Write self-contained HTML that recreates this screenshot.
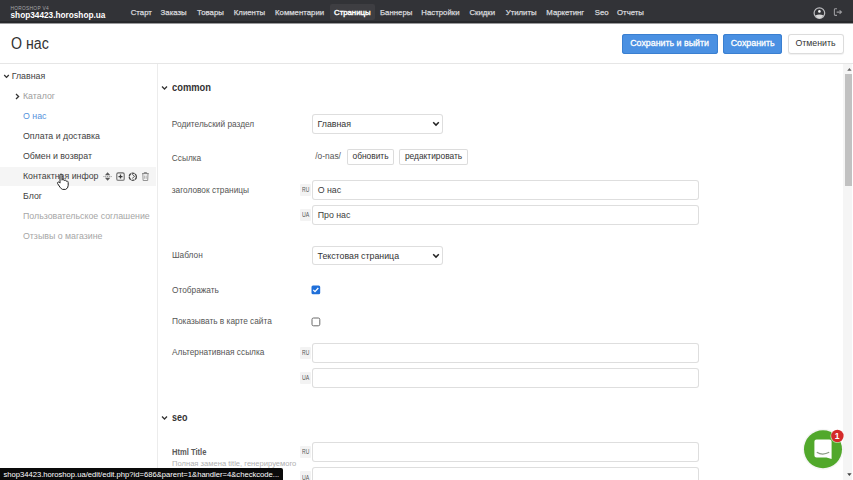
<!DOCTYPE html>
<html><head><meta charset="utf-8"><style>
html,body{margin:0;padding:0;width:853px;height:480px;overflow:hidden;background:#fff;}
body{position:relative;font-family:"Liberation Sans",sans-serif;}
.t{position:absolute;white-space:nowrap;}
.r{position:absolute;}
</style></head><body>
<div class="r" style="left:0px;top:0px;width:853px;height:23.4px;background:#323337"></div>
<div class="r" style="left:0px;top:21px;width:853px;height:2px;background:#27282b"></div>
<div class="r" style="left:0px;top:23px;width:853px;height:1px;background:#9a9a9c"></div>
<div class="r" style="left:329.5px;top:4px;width:45px;height:15.5px;background:#3e3e42;border-radius:2px"></div>
<div class="t" style="left:10.50px;top:7.14px;font-size:4.8px;line-height:4.8px;color:#a8a8ac;font-weight:normal;letter-spacing:0.3px;">HOROSHOP V4</div>
<div class="t" style="left:10.50px;top:11.91px;font-size:8.26px;line-height:8.26px;color:#ffffff;font-weight:bold;">shop34423.horoshop.ua</div>
<div class="t" style="left:130.70px;top:8.70px;font-size:7.8px;line-height:7.8px;color:#d8d8dc;font-weight:normal;-webkit-text-stroke:0.25px #d8d8dc;">Старт</div>
<div class="t" style="left:160.60px;top:8.70px;font-size:7.8px;line-height:7.8px;color:#d8d8dc;font-weight:normal;-webkit-text-stroke:0.25px #d8d8dc;">Заказы</div>
<div class="t" style="left:197.00px;top:8.70px;font-size:7.8px;line-height:7.8px;color:#d8d8dc;font-weight:normal;-webkit-text-stroke:0.25px #d8d8dc;">Товары</div>
<div class="t" style="left:233.80px;top:8.70px;font-size:7.8px;line-height:7.8px;color:#d8d8dc;font-weight:normal;-webkit-text-stroke:0.25px #d8d8dc;">Клиенты</div>
<div class="t" style="left:275.00px;top:8.70px;font-size:7.8px;line-height:7.8px;color:#d8d8dc;font-weight:normal;-webkit-text-stroke:0.25px #d8d8dc;">Комментарии</div>
<div class="t" style="left:334.00px;top:8.70px;font-size:7.8px;line-height:7.8px;color:#ffffff;font-weight:normal;-webkit-text-stroke:0.4px #fff;">Страницы</div>
<div class="t" style="left:380.00px;top:8.70px;font-size:7.8px;line-height:7.8px;color:#d8d8dc;font-weight:normal;-webkit-text-stroke:0.25px #d8d8dc;">Баннеры</div>
<div class="t" style="left:421.30px;top:8.70px;font-size:7.8px;line-height:7.8px;color:#d8d8dc;font-weight:normal;-webkit-text-stroke:0.25px #d8d8dc;">Настройки</div>
<div class="t" style="left:469.40px;top:8.70px;font-size:7.8px;line-height:7.8px;color:#d8d8dc;font-weight:normal;-webkit-text-stroke:0.25px #d8d8dc;">Скидки</div>
<div class="t" style="left:505.70px;top:8.70px;font-size:7.8px;line-height:7.8px;color:#d8d8dc;font-weight:normal;-webkit-text-stroke:0.25px #d8d8dc;">Утилиты</div>
<div class="t" style="left:546.30px;top:8.70px;font-size:7.8px;line-height:7.8px;color:#d8d8dc;font-weight:normal;-webkit-text-stroke:0.25px #d8d8dc;">Маркетинг</div>
<div class="t" style="left:594.80px;top:8.70px;font-size:7.8px;line-height:7.8px;color:#d8d8dc;font-weight:normal;-webkit-text-stroke:0.25px #d8d8dc;">Seo</div>
<div class="t" style="left:617.00px;top:8.70px;font-size:7.8px;line-height:7.8px;color:#d8d8dc;font-weight:normal;-webkit-text-stroke:0.25px #d8d8dc;">Отчеты</div>
<svg class="r" style="left:812px;top:5.5px" width="15" height="15" viewBox="0 0 15 15"><circle cx="7.4" cy="7.1" r="5.3" fill="none" stroke="#bdbdc0" stroke-width="1.2"/><circle cx="7.4" cy="5.4" r="1.3" fill="#f0f0f0"/><path d="M3.2 9.6 Q7.4 7.6 11.6 9.6 Q10 12.4 7.4 12.4 Q4.8 12.4 3.2 9.6Z" fill="#d8d8d8"/></svg>
<svg class="r" style="left:832px;top:6px" width="12" height="12" viewBox="0 0 12 12"><path d="M5 2.8 H3.2 Q2.4 2.8 2.4 3.6 V8.6 Q2.4 9.4 3.2 9.4 H5" fill="none" stroke="#9a9a9e" stroke-width="1.1"/><path d="M4.6 6.1 H9.4 M7.6 4.3 L9.5 6.1 L7.6 7.9" fill="none" stroke="#9a9a9e" stroke-width="1.1"/></svg>
<div class="t" style="left:10.90px;top:36.29px;font-size:15.6px;line-height:15.6px;color:#333333;font-weight:normal;transform:scaleX(0.9095);transform-origin:0 0;">О нас</div>
<div class="r" style="left:622px;top:33.5px;width:96px;height:20px;background:#4a90e2;border-radius:3px;box-shadow:inset 0 0 0 1px #3a7fd0"></div>
<div class="t" style="left:630.20px;top:38.81px;font-size:8.85px;line-height:8.85px;color:#ffffff;font-weight:normal;-webkit-text-stroke:0.3px #fff;">Сохранить и выйти</div>
<div class="r" style="left:723px;top:33.5px;width:59px;height:20px;background:#4a90e2;border-radius:3px;box-shadow:inset 0 0 0 1px #3a7fd0"></div>
<div class="t" style="left:730.70px;top:38.81px;font-size:8.85px;line-height:8.85px;color:#ffffff;font-weight:normal;-webkit-text-stroke:0.3px #fff;">Сохранить</div>
<div class="r" style="left:787.5px;top:33.5px;width:56.5px;height:20px;background:#fff;border-radius:3px;box-shadow:inset 0 0 0 1px #dcdcdc, 0 0.5px 1px rgba(0,0,0,0.06)"></div>
<div class="t" style="left:795.50px;top:38.89px;font-size:8.75px;line-height:8.75px;color:#333333;font-weight:normal;">Отменить</div>
<div class="r" style="left:0px;top:63px;width:853px;height:1px;background:#e6e6e6"></div>
<div class="r" style="left:157px;top:64px;width:1px;height:416px;background:#ececec"></div>
<div class="r" style="left:0px;top:167px;width:156px;height:19px;background:#f5f5f5"></div>
<svg class="r" style="left:2.5px;top:74px" width="7" height="5" viewBox="0 0 7 5"><path d="M1.2 1 L3.5 3.4 L5.8 1" fill="none" stroke="#333" stroke-width="1.3"/></svg>
<div class="t" style="left:11.70px;top:71.85px;font-size:8.8px;line-height:8.8px;color:#424242;font-weight:normal;">Главная</div>
<svg class="r" style="left:15px;top:93px" width="5" height="7" viewBox="0 0 5 7"><path d="M1 1 L3.6 3.5 L1 6" fill="none" stroke="#333" stroke-width="1.3"/></svg>
<div class="t" style="left:23.00px;top:91.85px;font-size:8.8px;line-height:8.8px;color:#9e9e9e;font-weight:normal;">Каталог</div>
<div class="t" style="left:23.00px;top:111.85px;font-size:8.8px;line-height:8.8px;color:#5592dc;font-weight:normal;">О нас</div>
<div class="t" style="left:23.00px;top:131.85px;font-size:8.8px;line-height:8.8px;color:#424242;font-weight:normal;">Оплата и доставка</div>
<div class="t" style="left:23.00px;top:151.85px;font-size:8.8px;line-height:8.8px;color:#424242;font-weight:normal;">Обмен и возврат</div>
<div class="t" style="left:23.00px;top:171.85px;font-size:8.8px;line-height:8.8px;color:#424242;font-weight:normal;">Контактная инфор</div>
<div class="t" style="left:23.00px;top:191.85px;font-size:8.8px;line-height:8.8px;color:#424242;font-weight:normal;">Блог</div>
<div class="t" style="left:23.00px;top:211.85px;font-size:8.8px;line-height:8.8px;color:#a6a6a6;font-weight:normal;">Пользовательское соглашение</div>
<div class="t" style="left:23.00px;top:231.85px;font-size:8.8px;line-height:8.8px;color:#a6a6a6;font-weight:normal;">Отзывы о магазине</div>
<svg class="r" style="left:100px;top:168px" width="52" height="18" viewBox="0 0 52 18"><path d="M7.6 4.3 L4.9 7.3 H10.3Z M7.6 12.8 L4.9 9.8 H10.3Z" fill="#5a5a5a"/><path d="M3.4 8.55 H11.9" stroke="#8a8a8a" stroke-width="0.9" stroke-dasharray="1.1 0.7"/><rect x="16.8" y="4.9" width="7.4" height="7.4" rx="1.4" fill="none" stroke="#6a6a6a" stroke-width="1.1"/><path d="M20.5 6.6 V10.6 M18.5 8.6 H22.5" stroke="#3a3a3a" stroke-width="1.3"/><circle cx="32.8" cy="8.7" r="3.6" fill="none" stroke="#4a4a4a" stroke-width="1.3" stroke-dasharray="3.2 0.6"/><path d="M32.2 6.3 L34.6 8.4 L32.2 10.4" fill="none" stroke="#4a4a4a" stroke-width="0.9"/><path d="M42 5.6 H48.8 M44.2 5.6 V4.6 H46.6 V5.6" fill="none" stroke="#7a7a7a" stroke-width="0.9"/><path d="M42.8 5.8 L43.1 12.5 H47.7 L48 5.8" fill="none" stroke="#8a8a8a" stroke-width="0.9"/><path d="M44.6 7.6 V10.8 M46.2 7.6 V10.8" stroke="#9a9a9a" stroke-width="0.7"/></svg>
<svg class="r" style="left:56px;top:173px" width="14" height="18" viewBox="0 0 14 18"><path d="M4 2.2 Q4 1 5 1 Q6 1 6 2.2 V7.2 Q6.4 6.4 7.4 6.6 Q8.2 6.8 8.2 7.6 Q8.6 7 9.5 7.2 Q10.3 7.5 10.3 8.3 Q10.8 7.9 11.5 8.2 Q12.2 8.6 12.2 9.6 V12.4 Q12.2 15.4 9.6 16.4 H6.6 Q5.2 16 4 14.2 L1.6 10.6 Q1.1 9.6 2 9.1 Q2.8 8.7 3.6 9.6 L4 10.1Z" fill="#fff" stroke="#222" stroke-width="1"/></svg>
<svg class="r" style="left:161px;top:85px" width="7" height="6" viewBox="0 0 7 6"><path d="M1 1.5 L3.5 4 L6 1.5" fill="none" stroke="#333" stroke-width="1.3"/></svg>
<div class="t" style="left:171.70px;top:83.30px;font-size:10.4px;line-height:10.4px;color:#333333;font-weight:bold;transform:scaleX(0.8999);transform-origin:0 0;">common</div>
<div class="t" style="left:171.80px;top:119.67px;font-size:8.3px;line-height:8.3px;color:#555555;font-weight:normal;">Родительский раздел</div>
<div class="t" style="left:171.80px;top:154.37px;font-size:8.3px;line-height:8.3px;color:#555555;font-weight:normal;">Ссылка</div>
<div class="t" style="left:171.80px;top:185.67px;font-size:8.3px;line-height:8.3px;color:#555555;font-weight:normal;">заголовок страницы</div>
<div class="t" style="left:172.00px;top:250.87px;font-size:8.3px;line-height:8.3px;color:#555555;font-weight:normal;">Шаблон</div>
<div class="t" style="left:172.00px;top:285.77px;font-size:8.3px;line-height:8.3px;color:#555555;font-weight:normal;">Отображать</div>
<div class="t" style="left:172.00px;top:316.67px;font-size:8.3px;line-height:8.3px;color:#555555;font-weight:normal;">Показывать в карте сайта</div>
<div class="t" style="left:172.00px;top:347.57px;font-size:8.3px;line-height:8.3px;color:#555555;font-weight:normal;">Альтернативная ссылка</div>
<div class="r" style="left:311.5px;top:113.5px;width:131.5px;height:20px;background:#fff;border-radius:3px;box-shadow:inset 0 0 0 1px #dedede"></div>
<div class="t" style="left:317.50px;top:119.55px;font-size:8.8px;line-height:8.8px;color:#333333;font-weight:normal;">Главная</div>
<svg class="r" style="left:432.0px;top:120.5px" width="8" height="6" viewBox="0 0 8 6"><path d="M1.2 1.3 L4 4.1 L6.8 1.3" fill="none" stroke="#222" stroke-width="1.5"/></svg>
<div class="t" style="left:315.30px;top:152.29px;font-size:8.4px;line-height:8.4px;color:#555555;font-weight:normal;">/o-nas/</div>
<div class="r" style="left:347.2px;top:148.5px;width:46.8px;height:16.2px;background:#fff;border-radius:2px;box-shadow:inset 0 0 0 1px #dcdcdc"></div>
<div class="t" style="left:352.50px;top:152.19px;font-size:8.4px;line-height:8.4px;color:#333333;font-weight:normal;">обновить</div>
<div class="r" style="left:399.3px;top:148.5px;width:69px;height:16.2px;background:#fff;border-radius:2px;box-shadow:inset 0 0 0 1px #dcdcdc"></div>
<div class="t" style="left:404.90px;top:152.19px;font-size:8.4px;line-height:8.4px;color:#333333;font-weight:normal;">редактировать</div>
<div class="r" style="left:299.7px;top:183.5px;width:11px;height:12.5px;background:#f3f3f3;border-radius:1px"></div>
<div class="t" style="left:302.10px;top:186.87px;font-size:6.3px;line-height:6.3px;color:#555555;font-weight:normal;transform:scaleX(0.8022);transform-origin:0 0;">RU</div>
<div class="r" style="left:311.7px;top:179.5px;width:387.3px;height:20px;background:#fff;border-radius:3px;box-shadow:inset 0 0 0 1px #dedede"></div>
<div class="t" style="left:317.70px;top:185.75px;font-size:8.8px;line-height:8.8px;color:#3d3d3d;font-weight:normal;">О нас</div>
<div class="r" style="left:299.7px;top:208.7px;width:11px;height:12.5px;background:#f3f3f3;border-radius:1px"></div>
<div class="t" style="left:302.10px;top:212.07px;font-size:6.3px;line-height:6.3px;color:#555555;font-weight:normal;transform:scaleX(0.8341);transform-origin:0 0;">UA</div>
<div class="r" style="left:311.7px;top:204.7px;width:387.3px;height:20px;background:#fff;border-radius:3px;box-shadow:inset 0 0 0 1px #dedede"></div>
<div class="t" style="left:317.70px;top:210.95px;font-size:8.8px;line-height:8.8px;color:#3d3d3d;font-weight:normal;">Про нас</div>
<div class="r" style="left:311.5px;top:245.5px;width:131.5px;height:19px;background:#fff;border-radius:3px;box-shadow:inset 0 0 0 1px #dedede"></div>
<div class="t" style="left:317.50px;top:251.55px;font-size:8.8px;line-height:8.8px;color:#333333;font-weight:normal;">Текстовая страница</div>
<svg class="r" style="left:432.0px;top:252.5px" width="8" height="6" viewBox="0 0 8 6"><path d="M1.2 1.3 L4 4.1 L6.8 1.3" fill="none" stroke="#222" stroke-width="1.5"/></svg>
<svg class="r" style="left:311px;top:285px" width="10" height="10" viewBox="0 0 10 10"><rect x="0.5" y="0.5" width="8.7" height="8.7" rx="1.5" fill="#1f6fd9"/><path d="M2.3 4.9 L4 6.6 L7.3 3" fill="none" stroke="#fff" stroke-width="1.3"/></svg>
<svg class="r" style="left:311px;top:317px" width="10" height="10" viewBox="0 0 10 10"><rect x="1" y="1" width="7.8" height="7.8" rx="1.5" fill="#fff" stroke="#6a6a6a" stroke-width="1"/></svg>
<div class="r" style="left:299.7px;top:346.5px;width:11px;height:12.5px;background:#f3f3f3;border-radius:1px"></div>
<div class="t" style="left:302.10px;top:349.87px;font-size:6.3px;line-height:6.3px;color:#555555;font-weight:normal;transform:scaleX(0.8022);transform-origin:0 0;">RU</div>
<div class="r" style="left:311.7px;top:342.5px;width:387.3px;height:20px;background:#fff;border-radius:3px;box-shadow:inset 0 0 0 1px #dedede"></div>
<div class="r" style="left:299.7px;top:371.5px;width:11px;height:12.5px;background:#f3f3f3;border-radius:1px"></div>
<div class="t" style="left:302.10px;top:374.87px;font-size:6.3px;line-height:6.3px;color:#555555;font-weight:normal;transform:scaleX(0.8341);transform-origin:0 0;">UA</div>
<div class="r" style="left:311.7px;top:367.5px;width:387.3px;height:20px;background:#fff;border-radius:3px;box-shadow:inset 0 0 0 1px #dedede"></div>
<svg class="r" style="left:161px;top:415px" width="7" height="6" viewBox="0 0 7 6"><path d="M1 1.5 L3.5 4 L6 1.5" fill="none" stroke="#333" stroke-width="1.3"/></svg>
<div class="t" style="left:172.00px;top:412.60px;font-size:10.4px;line-height:10.4px;color:#333333;font-weight:bold;transform:scaleX(0.8649);transform-origin:0 0;">seo</div>
<div class="t" style="left:172.00px;top:448.37px;font-size:8.3px;line-height:8.3px;color:#5a5a5a;font-weight:bold;transform:scaleX(0.9134);transform-origin:0 0;">Html Title</div>
<div class="t" style="left:172.00px;top:460.17px;font-size:7.6px;line-height:7.6px;color:#b0b0b0;font-weight:normal;">Полная замена title, генерируемого</div>
<div class="r" style="left:299.7px;top:445.8px;width:11px;height:12.5px;background:#f3f3f3;border-radius:1px"></div>
<div class="t" style="left:302.10px;top:449.17px;font-size:6.3px;line-height:6.3px;color:#555555;font-weight:normal;transform:scaleX(0.8022);transform-origin:0 0;">RU</div>
<div class="r" style="left:311.7px;top:441.8px;width:387.3px;height:20px;background:#fff;border-radius:3px;box-shadow:inset 0 0 0 1px #dedede"></div>
<div class="r" style="left:299.7px;top:471.3px;width:11px;height:12.5px;background:#f3f3f3;border-radius:1px"></div>
<div class="t" style="left:302.10px;top:474.67px;font-size:6.3px;line-height:6.3px;color:#555555;font-weight:normal;transform:scaleX(0.8341);transform-origin:0 0;">UA</div>
<div class="r" style="left:311.7px;top:467.3px;width:387.3px;height:20px;background:#fff;border-radius:3px;box-shadow:inset 0 0 0 1px #dedede"></div>
<div class="r" style="left:0px;top:467.5px;width:282.5px;height:13px;background:#0a0a0a;border-top-right-radius:2px"></div>
<div class="t" style="left:3.40px;top:470.54px;font-size:7.63px;line-height:7.63px;color:#ffffff;font-weight:normal;">shop34423.horoshop.ua/edit/edit.php?id=686&amp;parent=1&amp;handler=4&amp;checkcode...</div>
<div class="r" style="left:843px;top:64px;width:9px;height:416px;background:#f5f5f5"></div>
<div class="r" style="left:845px;top:74px;width:7px;height:111.5px;background:#c1c1c1"></div>
<svg class="r" style="left:844.5px;top:66px" width="9" height="6" viewBox="0 0 9 6"><path d="M2.2 4.7 L4.4 1.9 L6.6 4.7Z" fill="#666"/></svg>
<svg class="r" style="left:844.5px;top:472px" width="9" height="6" viewBox="0 0 9 6"><path d="M2.2 1.3 L4.4 4.1 L6.6 1.3Z" fill="#444"/></svg>
<svg class="r" style="left:795px;top:420px" width="50" height="55" viewBox="0 0 50 55"><circle cx="28" cy="29.3" r="20.5" fill="#000" opacity="0.04"/><circle cx="28" cy="29.2" r="19" fill="#51a82b"/><path d="M21.5 19.5 H34.5 Q36.6 19.5 36.6 21.6 V39 L31.5 37.5 H21.5 Q19.4 37.5 19.4 35.4 V21.6 Q19.4 19.5 21.5 19.5Z" fill="#fff"/><path d="M21.8 32.3 Q27.5 35.8 34.2 32.3" fill="none" stroke="#8a9a84" stroke-width="1.2"/><circle cx="42.4" cy="16" r="7" fill="#fff" opacity="0.6"/><circle cx="42.4" cy="16" r="6.2" fill="#d42a2a"/><text x="42.2" y="19.2" font-family="Liberation Sans" font-weight="bold" font-size="8.6" fill="#fff" text-anchor="middle">1</text></svg>
</body></html>
